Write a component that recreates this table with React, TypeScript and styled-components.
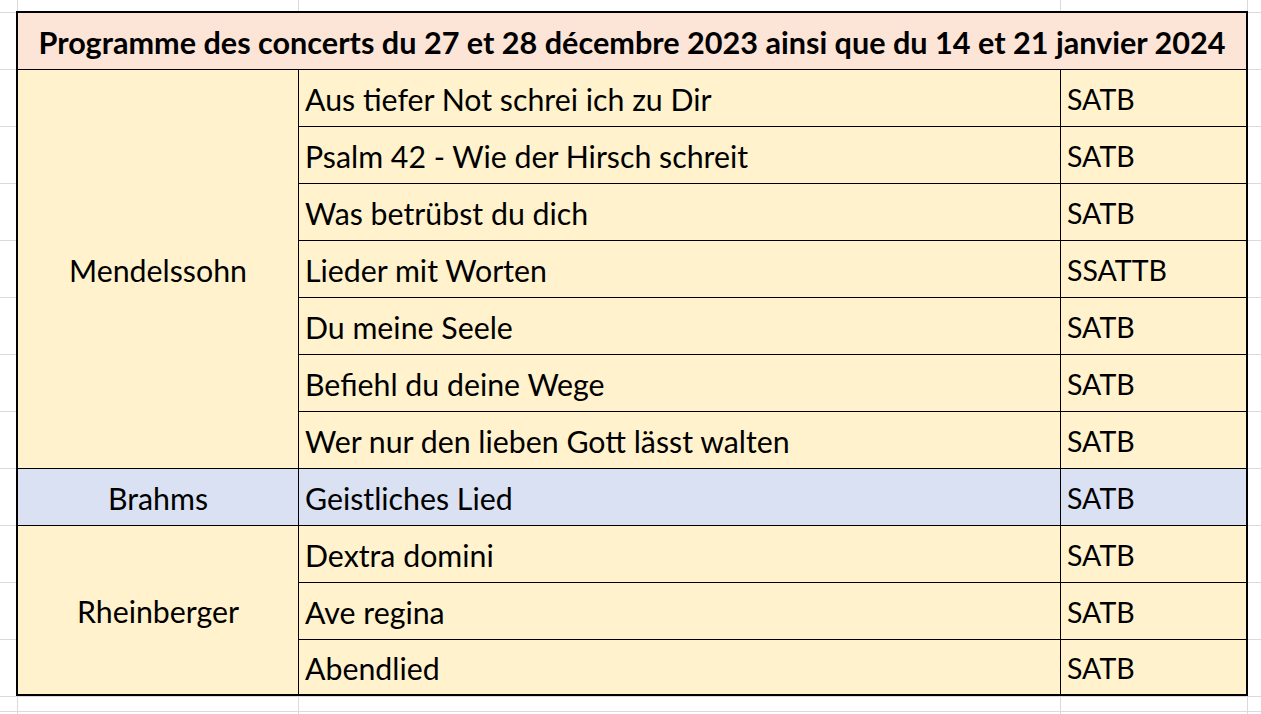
import React from "react";
import styled, { createGlobalStyle } from "styled-components";

const GRID = "#dadada";

const GlobalStyle = createGlobalStyle`
  html, body {
    margin: 0;
    padding: 0;
    height: 100%;
  }
  body {
    background-color: #ffffff;
    background-image:
      linear-gradient(${GRID}, ${GRID}),
      linear-gradient(${GRID}, ${GRID}),
      linear-gradient(${GRID}, ${GRID}),
      linear-gradient(${GRID}, ${GRID}),
      linear-gradient(${GRID}, ${GRID}),
      repeating-linear-gradient(to bottom, ${GRID} 0 1px, transparent 1px 57px);
    background-size: 1px 100%, 1px 100%, 1px 100%, 1px 100%, 100% 1px, 100% 100%;
    background-position: 17px 0, 298px 0, 1060px 0, 1247px 0, 0 711px, 0 12px;
    background-repeat: no-repeat;
    font-family: Lato, "Noto Sans", sans-serif;
    color: #000;
  }
`;

const Page = styled.div`
  padding: 11px 0 0 16px;
`;

const Table = styled.div`
  box-sizing: border-box;
  width: 1232px;
  border: 2px solid #000;
  display: grid;
  grid-template-columns: 281px 762px 185px;
  grid-template-rows: 57px repeat(10, 57px) 54px;
  background: #fff2cc;
`;

const Header = styled.div`
  grid-column: 1 / -1;
  box-sizing: border-box;
  border-bottom: 1px solid #000;
  background: #fce4d6;
  display: flex;
  align-items: center;
  justify-content: center;
  font-weight: 700;
  font-size: 30.6px;
  padding-top: 2px;
  white-space: nowrap;
`;

type Tone = "yellow" | "blue";
const fills: Record<Tone, string> = { yellow: "#fff2cc", blue: "#d9e1f2" };

const Cell = styled.div<{ $tone: Tone; $last: boolean }>`
  box-sizing: border-box;
  background: ${(p) => fills[p.$tone]};
  border-bottom: ${(p) => (p.$last ? "none" : "1px solid #000")};
  display: flex;
  align-items: center;
  font-size: 30.3px;
  padding-top: 2px;
  white-space: nowrap;
`;

const ComposerCell = styled(Cell)<{ $span: number }>`
  grid-row: span ${(p) => p.$span};
  border-right: 1px solid #000;
  justify-content: center;
`;

const TitleCell = styled(Cell)`
  border-right: 1px solid #000;
  padding-left: 6px;
`;

const VoiceCell = styled(Cell)`
  padding-left: 6px;
  font-size: 28.5px;
`;

type Group = { composer: string; tone: Tone; pieces: [string, string][] };

const groups: Group[] = [
  {
    composer: "Mendelssohn",
    tone: "yellow",
    pieces: [
      ["Aus tiefer Not schrei ich zu Dir", "SATB"],
      ["Psalm 42 - Wie der Hirsch schreit", "SATB"],
      ["Was betrübst du dich", "SATB"],
      ["Lieder mit Worten", "SSATTB"],
      ["Du meine Seele", "SATB"],
      ["Befiehl du deine Wege", "SATB"],
      ["Wer nur den lieben Gott lässt walten", "SATB"],
    ],
  },
  {
    composer: "Brahms",
    tone: "blue",
    pieces: [["Geistliches Lied", "SATB"]],
  },
  {
    composer: "Rheinberger",
    tone: "yellow",
    pieces: [
      ["Dextra domini", "SATB"],
      ["Ave regina", "SATB"],
      ["Abendlied", "SATB"],
    ],
  },
];

export default function App() {
  return (
    <>
      <GlobalStyle />
      <Page>
        <Table>
          <Header>
            Programme des concerts du 27 et 28 décembre 2023 ainsi que du 14 et 21 janvier 2024
          </Header>
          {groups.map((g, gi) => {
            const lastGroup = gi === groups.length - 1;
            return (
              <React.Fragment key={g.composer}>
                {g.pieces.map(([title, voices], pi) => {
                  const last = lastGroup && pi === g.pieces.length - 1;
                  return (
                    <React.Fragment key={title}>
                      {pi === 0 && (
                        <ComposerCell $tone={g.tone} $last={lastGroup} $span={g.pieces.length}>
                          {g.composer}
                        </ComposerCell>
                      )}
                      <TitleCell $tone={g.tone} $last={last}>
                        {title}
                      </TitleCell>
                      <VoiceCell $tone={g.tone} $last={last}>
                        {voices}
                      </VoiceCell>
                    </React.Fragment>
                  );
                })}
              </React.Fragment>
            );
          })}
        </Table>
      </Page>
    </>
  );
}
